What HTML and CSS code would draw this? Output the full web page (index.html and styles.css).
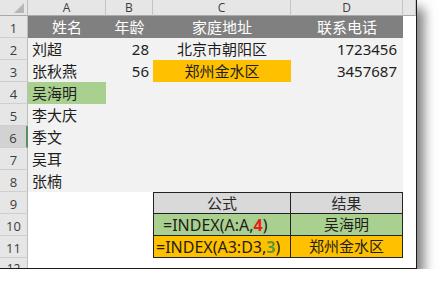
FILE: index.html
```html
<!DOCTYPE html>
<html lang="zh">
<head>
<meta charset="utf-8">
<link rel="stylesheet" href="styles.css">
</head>
<body>
<div class="sheet">
  <div class="corner"><svg width="10" height="10" viewBox="0 0 10 10"><polygon points="10,0 10,10 0,10" fill="#b7b7b7"/></svg></div>
  <div class="ch">A</div><div class="ch">B</div><div class="ch">C</div><div class="ch">D</div><div class="ch"></div>

  <div class="rh">1</div><div class="c hd">姓名</div><div class="c hd">年龄</div><div class="c hd">家庭地址</div><div class="c hd">联系电话</div><div class="c"></div>
  <div class="rh">2</div><div class="c f">刘超</div><div class="c f r">28</div><div class="c f m">北京市朝阳区</div><div class="c f r d">1723456</div><div class="c"></div>
  <div class="rh">3</div><div class="c f">张秋燕</div><div class="c f r">56</div><div class="c or m">郑州金水区</div><div class="c f r d">3457687</div><div class="c"></div>
  <div class="rh">4</div><div class="c gr">吴海明</div><div class="c f"></div><div class="c f"></div><div class="c f"></div><div class="c"></div>
  <div class="rh">5</div><div class="c f">李大庆</div><div class="c f"></div><div class="c f"></div><div class="c f"></div><div class="c"></div>
  <div class="rh sel">6</div><div class="c f">季文</div><div class="c f"></div><div class="c f"></div><div class="c f"></div><div class="c"></div>
  <div class="rh">7</div><div class="c f">吴耳</div><div class="c f"></div><div class="c f"></div><div class="c f"></div><div class="c"></div>
  <div class="rh">8</div><div class="c f">张楠</div><div class="c f"></div><div class="c f"></div><div class="c f"></div><div class="c"></div>
  <div class="rh">9</div><div class="c"></div><div class="c"></div><div class="c t tl tt m th">公式</div><div class="c t tt m th">结果</div><div class="c"></div>
  <div class="rh">10</div><div class="c"></div><div class="c"></div><div class="c t tl gr fx fx1">=INDEX(A:A,<b class="red">4</b>)</div><div class="c t gr m">吴海明</div><div class="c"></div>
  <div class="rh">11</div><div class="c"></div><div class="c"></div><div class="c t tl or fx fx2">=INDEX(A3:D3,<b class="grn">3</b>)</div><div class="c t or m">郑州金水区</div><div class="c"></div>
  <div class="rh last">12</div><div class="c"></div><div class="c"></div><div class="c"></div><div class="c"></div><div class="c"></div>
</div>
</body>
</html>
```
FILE: styles.css
```css
html, body {
  margin: 0;
  padding: 0;
  background: #ffffff;
}

.sheet {
  width: 416px;
  height: 268px;
  overflow: hidden;
  display: grid;
  grid-template-columns: 28px 78px 47px 138px 112px 13px;
  grid-template-rows: 16px repeat(11, 22px) 10px;
  background: #ffffff;
  border-right: 1px solid #1a1a1a;
  border-bottom: 1px solid #1a1a1a;
  box-shadow: 7px 8px 11px rgba(0, 0, 0, 0.5);
  font-family: "Noto Sans", "Noto Sans CJK SC", sans-serif;
}

.corner {
  background: #e6e6e6;
  border-right: 1px solid #bdbdbd;
  border-bottom: 1px solid #a9a9a9;
  box-sizing: border-box;
  display: flex;
  justify-content: flex-end;
  align-items: flex-end;
  padding: 0 3px 2px 0;
}

.ch {
  background: #e6e6e6;
  border-right: 1px solid #c4c4c4;
  border-bottom: 1px solid #a9a9a9;
  box-sizing: border-box;
  display: flex;
  align-items: center;
  justify-content: center;
  font-family: "Open Sans", "Noto Sans", sans-serif;
  font-size: 12px;
  color: #3c3c3c;
  line-height: 1;
}

.rh {
  background: #e6e6e6;
  border-right: 1px solid #bdbdbd;
  border-bottom: 1px solid #cfcfcf;
  box-sizing: border-box;
  display: flex;
  align-items: center;
  justify-content: center;
  font-family: "Open Sans", "Noto Sans", sans-serif;
  font-size: 13px;
  color: #3c3c3c;
  padding-top: 2px;
}

.rh.last {
  align-items: flex-start;
  padding-top: 5px;
  font-size: 12px;
  line-height: 1;
  border-bottom: none;
}

.rh.sel {
  background: #d2d2d2;
  border-right: 2px solid #5a8f6a;
}

.c {
  box-sizing: border-box;
  display: flex;
  align-items: center;
  padding: 0 4px;
  font-size: 15px;
  color: #1e1e1e;
  white-space: nowrap;
  line-height: 1;
}

.f { background: #f2f2f2; }
.hd {
  background: #808080;
  color: #ffffff;
  justify-content: center;
}
.r { justify-content: flex-end; }
.d { padding-right: 6px; }
.m { justify-content: center; }
.gr { background: #a9d08e; }
.or { background: #ffc000; }
.th { background: #d9d9d9; color: #2a2a2a; }

.t {
  border-right: 1px solid #222222;
  border-bottom: 1px solid #222222;
}
.tl { border-left: 1px solid #222222; }
.tt { border-top: 1px solid #222222; }
.fx { font-size: 16px; }
.fx1 { padding-left: 9px; }
.fx2 { padding-left: 2px; }

.red { color: #e8201a; font-weight: 700; }
.grn { color: #5b9a3a; font-weight: 700; }
```
